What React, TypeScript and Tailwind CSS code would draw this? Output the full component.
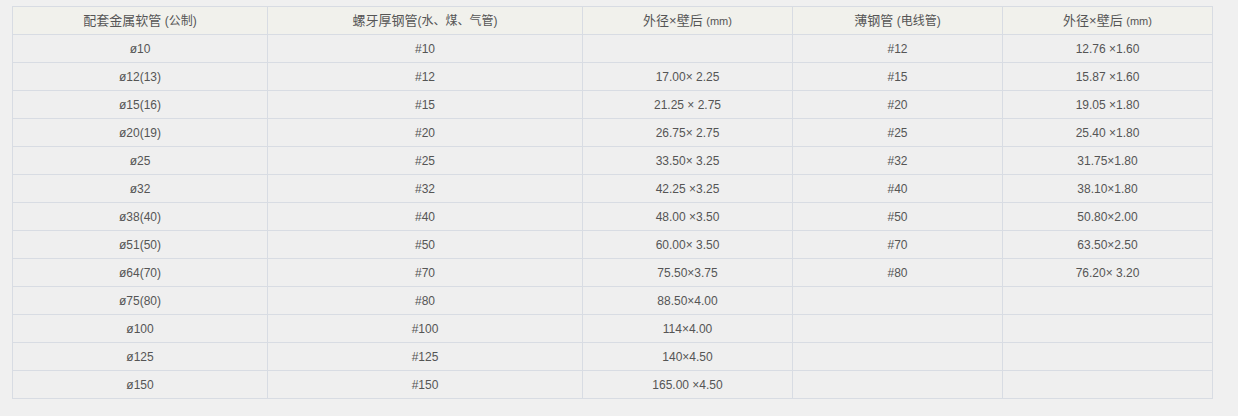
const rows: [string, string, string, string, string][] = [
  ["ø10", "#10", "", "#12", "12.76 ×1.60"],
  ["ø12(13)", "#12", "17.00× 2.25", "#15", "15.87 ×1.60"],
  ["ø15(16)", "#15", "21.25 × 2.75", "#20", "19.05 ×1.80"],
  ["ø20(19)", "#20", "26.75× 2.75", "#25", "25.40 ×1.80"],
  ["ø25", "#25", "33.50× 3.25", "#32", "31.75×1.80"],
  ["ø32", "#32", "42.25 ×3.25", "#40", "38.10×1.80"],
  ["ø38(40)", "#40", "48.00 ×3.50", "#50", "50.80×2.00"],
  ["ø51(50)", "#50", "60.00× 3.50", "#70", "63.50×2.50"],
  ["ø64(70)", "#70", "75.50×3.75", "#80", "76.20× 3.20"],
  ["ø75(80)", "#80", "88.50×4.00", "", ""],
  ["ø100", "#100", "114×4.00", "", ""],
  ["ø125", "#125", "140×4.50", "", ""],
  ["ø150", "#150", "165.00 ×4.50", "", ""],
];

function Header({ main, unit, small }: { main: string; unit: string; small?: boolean }) {
  return (
    <span>
      {main}
      <span className={small ? "text-[11px]" : "text-[12px]"}>{unit}</span>
    </span>
  );
}

export default function App() {
  return (
    <div
      className="min-h-[416px] w-full bg-[#f0f0f0] pl-3 pt-1.5"
      style={{ fontFamily: '"Liberation Sans", "Noto Sans CJK SC", sans-serif' }}
    >
      <table className="w-[1200px] table-fixed border-collapse border border-[#d8dce3] text-center text-[#555]">
        <colgroup>
          <col className="w-[255px]" />
          <col className="w-[315px]" />
          <col className="w-[210px]" />
          <col className="w-[210px]" />
          <col className="w-[210px]" />
        </colgroup>
        <thead>
          <tr className="h-[28px] bg-[#f1f1ec] text-[13px]">
            <th className="border border-[#d8dce3] font-normal">
              <Header main="配套金属软管 " unit="(公制)" />
            </th>
            <th className="border border-[#d8dce3] font-normal">
              <Header main="螺牙厚钢管" unit="(水、煤、气管)" />
            </th>
            <th className="border border-[#d8dce3] font-normal">
              <Header main="外径×壁后 " unit="(mm)" small />
            </th>
            <th className="border border-[#d8dce3] font-normal">
              <Header main="薄钢管 " unit="(电线管)" />
            </th>
            <th className="border border-[#d8dce3] font-normal">
              <Header main="外径×壁后 " unit="(mm)" small />
            </th>
          </tr>
        </thead>
        <tbody className="text-[12px]">
          {rows.map((r, i) => (
            <tr key={i} className="h-[28px] bg-[#efefef]">
              {r.map((c, j) => (
                <td key={j} className="border border-[#d8dce3] p-0 pt-px">
                  {c}
                </td>
              ))}
            </tr>
          ))}
        </tbody>
      </table>
    </div>
  );
}
